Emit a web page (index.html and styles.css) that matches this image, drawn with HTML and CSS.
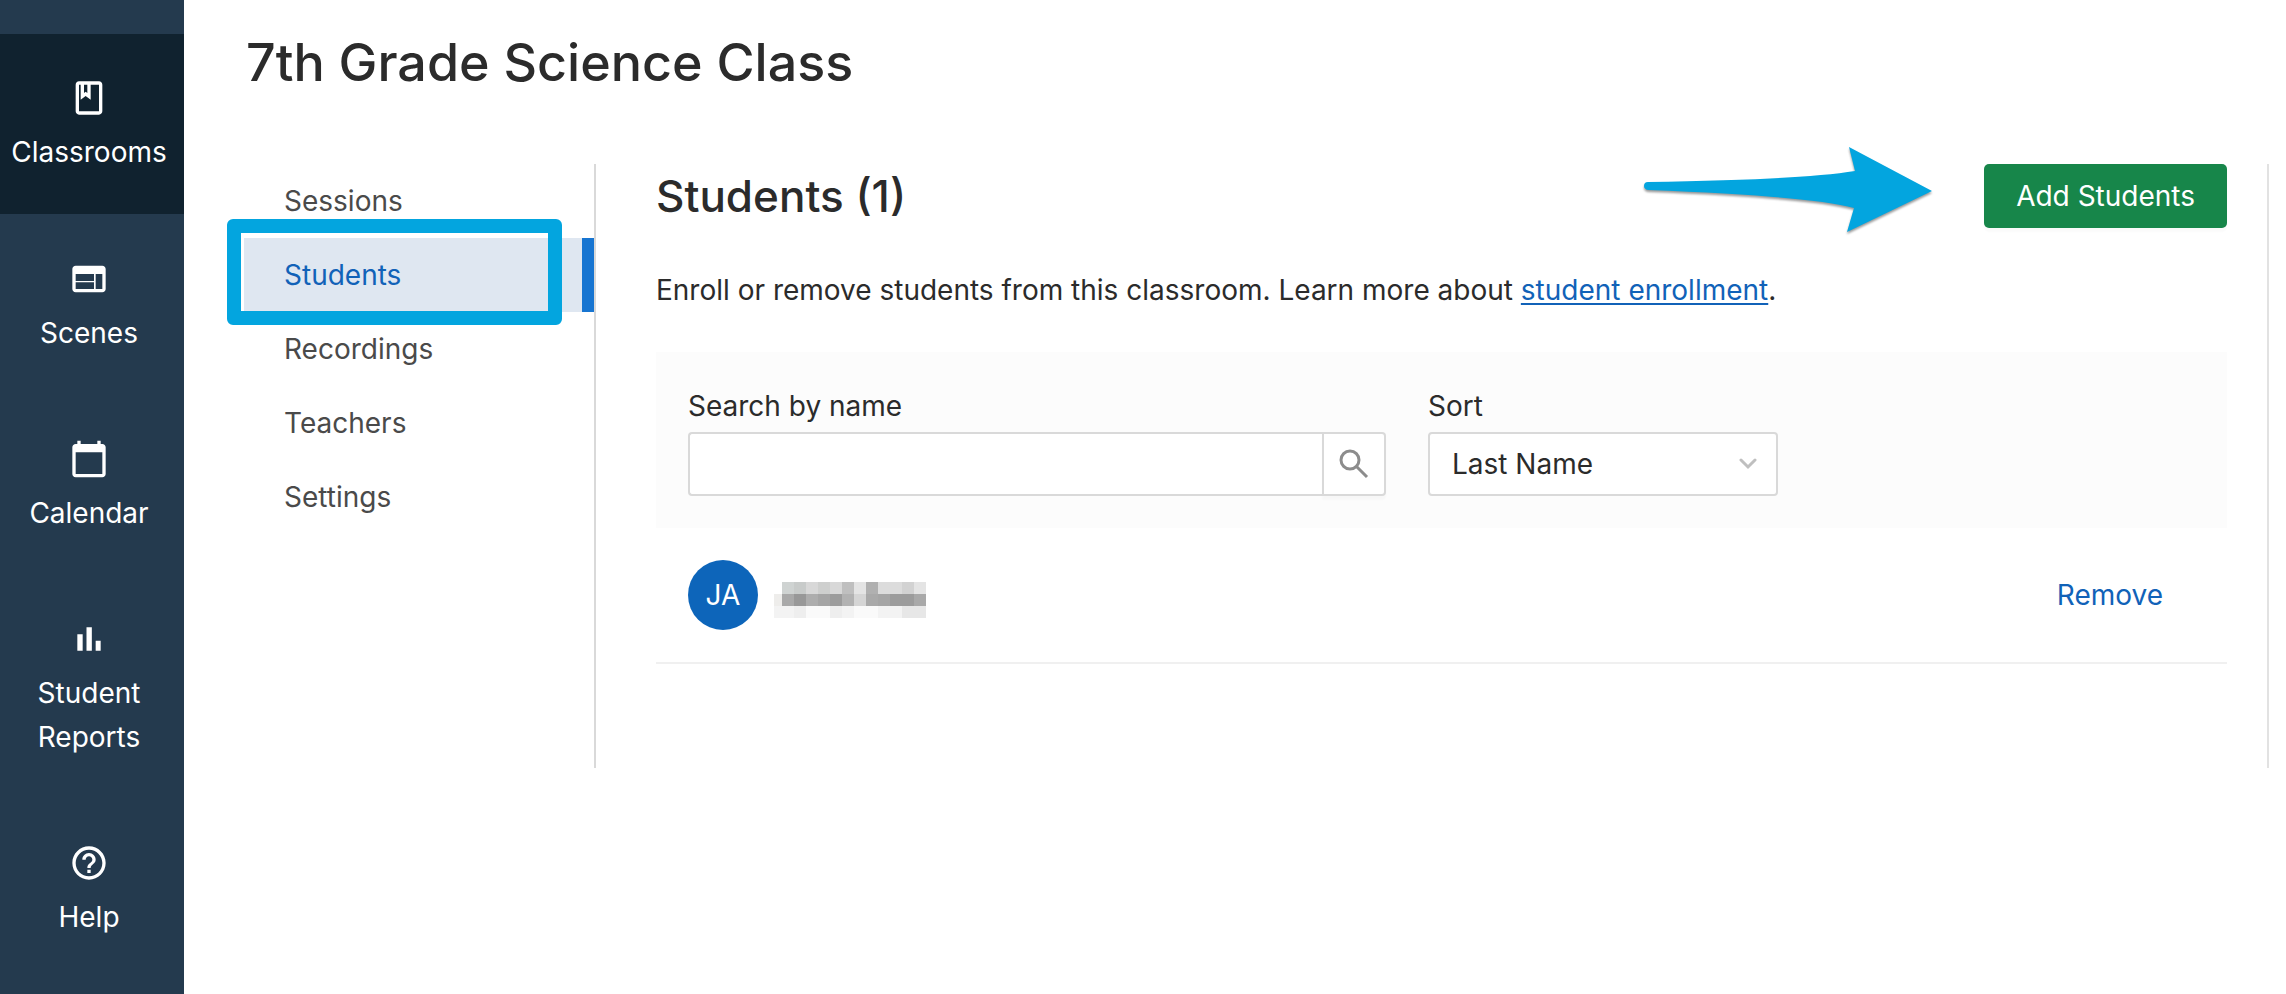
FILE: index.html
```html
<!DOCTYPE html>
<html lang="en">
<head>
<meta charset="utf-8">
<title>7th Grade Science Class</title>
<link rel="stylesheet" href="styles.css">
</head>
<body>
<div class="app">
  <nav class="sidebar" aria-label="Main">
    <a class="side-link side-link-active" href="#classrooms">
      <svg class="side-icon" viewBox="0 0 24 24" aria-hidden="true"><path d="M18 2H6c-1.1 0-2 .9-2 2v16c0 1.1.9 2 2 2h12c1.1 0 2-.9 2-2V4c0-1.1-.9-2-2-2zM9 4h2v5l-1-.75L9 9V4zm9 16H6V4h1v9l3-2.25L13 13V4h5v16z"/></svg>
      <span>Classrooms</span>
    </a>
    <a class="side-link" href="#scenes">
      <svg class="side-icon" viewBox="0 0 24 24" aria-hidden="true"><path fill-rule="evenodd" d="M20 4H4c-1.1 0-2 .9-2 2v12c0 1.100.9 2 2 2h16c1.100 0 2-.9 2-2V6c0-1.100-.9-2-2-2zM4 9h11v4.200H4zM4 14h11v4H4zM16 9h4v9h-4z"/></svg>
      <span>Scenes</span>
    </a>
    <a class="side-link" href="#calendar">
      <svg class="side-icon" viewBox="0 0 24 24" aria-hidden="true"><path d="M20 3h-1V1h-2v2H7V1H5v2H4c-1.1 0-2 .9-2 2v16c0 1.1.9 2 2 2h16c1.1 0 2-.9 2-2V5c0-1.1-.9-2-2-2zm0 18H4V8h16v13z"/></svg>
      <span>Calendar</span>
    </a>
    <a class="side-link" href="#reports">
      <svg class="side-icon" viewBox="0 0 24 24" aria-hidden="true"><path d="M5 9.200h3.200V19H5zM10.500 5h3.200v14h-3.200zM16 13h3v6h-3z"/></svg>
      <span>Student Reports</span>
    </a>
    <a class="side-link" href="#help">
      <svg class="side-icon" viewBox="0 0 24 24" aria-hidden="true"><path d="M11 18h2v-2h-2v2zm1-16C6.480 2 2 6.480 2 12s4.480 10 10 10 10-4.480 10-10S17.520 2 12 2zm0 18c-4.410 0-8-3.590-8-8s3.590-8 8-8 8 3.590 8 8-3.590 8-8 8zm0-14c-2.210 0-4 1.790-4 4h2c0-1.100.9-2 2-2s2 .9 2 2c0 2-3 1.750-3 5h2c0-2.250 3-2.500 3-5 0-2.210-1.790-4-4-4z"/></svg>
      <span>Help</span>
    </a>
  </nav>

  <main class="main">
    <h1 class="page-title">7th Grade Science Class</h1>
    <div class="panel">
      <nav class="tabs" aria-label="Classroom">
        <a class="tab" href="#sessions">Sessions</a>
        <a class="tab tab-active" href="#students" aria-current="page">Students<span class="callout-box"></span></a>
        <a class="tab" href="#recordings">Recordings</a>
        <a class="tab" href="#teachers">Teachers</a>
        <a class="tab" href="#settings">Settings</a>
      </nav>

      <section class="content">
        <header class="content-head">
          <h2 class="section-title">Students (1)</h2>
          <svg class="callout-arrow" viewBox="0 0 296 96" aria-hidden="true"><path d="M8 38Q160 36 215 27L209 3L292 47L207 88L214 64Q170 52 8 46Q4 45 4 42Q4 38 8 38Z"/></svg>
          <button class="add-button" type="button">Add Students</button>
        </header>
        <p class="intro">Enroll or remove students from this classroom. Learn more about <a class="link" href="#enrollment">student enrollment</a>.</p>

        <form class="filters">
          <div class="field field-search">
            <label for="search">Search by name</label>
            <div class="search-group">
              <input class="search-input" id="search" type="text">
              <button class="search-button" type="button" aria-label="Search">
                <svg class="search-icon" viewBox="0 0 30 30" aria-hidden="true"><circle cx="11" cy="11" r="9"/><path d="M17.500 17.500L28 28"/></svg>
              </button>
            </div>
          </div>
          <div class="field field-sort">
            <label for="sort">Sort</label>
            <div class="select-wrap">
              <select class="sort-select" id="sort"><option>Last Name</option></select>
              <svg class="chevron" viewBox="0 0 18 12" aria-hidden="true"><path d="M2 2l7 7 7-7"/></svg>
            </div>
          </div>
        </form>

        <ul class="students">
          <li class="student">
            <span class="avatar">JA</span>
            <svg class="masked-name" viewBox="0 -10 152 46" role="img" aria-label="Hidden name" shape-rendering="crispEdges">
              <path fill="#eeedeb" d="M0 12h8v12H0z"/><path fill="#f3f3f3" d="M0 24h20v12H0z"/>
              <path fill="#cfd3d2" d="M8 0h12v12H8z"/><path fill="#c8cbca" d="M20 0h12v12H20z"/><path fill="#d8d8d8" d="M32 0h12v12H32zM56 0h12v12H56z"/><path fill="#cecfce" d="M44 0h12v12H44z"/><path fill="#bfbfbf" d="M68 0h12v12H68z"/><path fill="#e4e4e4" d="M80 0h12v12H80zM140 0h12v12h-12z"/><path fill="#b0b0b0" d="M92 0h12v12H92z"/><path fill="#dcdcdc" d="M104 0h24v12h-24z"/><path fill="#d2d2d2" d="M128 0h12v12h-12z"/>
              <path fill="#a9a9a9" d="M8 12h12v12H8zM92 12h12v12H92zM140 12h12v12h-12z"/><path fill="#989898" d="M20 12h12v12H20z"/><path fill="#adadad" d="M32 12h12v12H32z"/><path fill="#a5a5a5" d="M44 12h12v12H44zM104 12h12v12h-12z"/><path fill="#9c9c9c" d="M56 12h12v12H56zM116 12h24v12h-24z"/><path fill="#b2b2b2" d="M68 12h12v12H68z"/><path fill="#d5d5d5" d="M80 12h12v12H80z"/>
              <path fill="#eeeeee" d="M20 24h12v12H20zM56 24h12v12H56z"/><path fill="#fafafa" d="M32 24h24v12H32zM80 24h24v12H80z"/><path fill="#f3f3f3" d="M68 24h12v12H68zM104 24h24v12h-24z"/><path fill="#e7e7e7" d="M128 24h24v12h-24z"/>
            </svg>
            <button class="remove-button" type="button">Remove</button>
          </li>
        </ul>
      </section>
    </div>
  </main>
</div>
</body>
</html>
```

FILE: styles.css
```css
*, *::before, *::after { box-sizing: border-box; }

body {
  margin: 0;
  background: #fff;
  color: #2b2b2b;
  font: 28px/44px Inter, "Liberation Sans", sans-serif;
}

button, input, select { font: inherit; color: inherit; }

.app { display: flex; min-height: 100vh; }

/* Main navigation */
.sidebar {
  flex: 0 0 184px;
  padding-top: 34px;
  background: #243a4e;
}

.side-link {
  display: flex;
  flex-direction: column;
  align-items: center;
  gap: 12px;
  padding: 44px 6px 40px 0;
  color: #fff;
  text-align: center;
  text-decoration: none;
}

.side-link-active { margin-bottom: 1px; background: #10222f; }

.side-icon { width: 40px; height: 40px; fill: currentColor; }

/* Page */
.main { flex: 1; min-width: 0; padding: 33px 17px 0 60px; }

.page-title {
  margin: 0 0 71px;
  padding-left: 2px;
  font-size: 52px;
  line-height: 60px;
  font-weight: 500;
}

.panel { display: flex; border-right: 2px solid #e2e2e2; }

.tabs { flex: 0 0 352px; border-right: 2px solid #d9d9d9; }

.tab {
  position: relative;
  display: block;
  padding: 15px 40px;
  color: #4a4a4a;
  text-decoration: none;
}

.tab-active {
  background: #dfe7f1;
  border-right: 12px solid #1775d1;
  color: #1162b8;
}

.callout-box {
  position: absolute;
  top: -19px;
  right: 20px;
  bottom: -13px;
  left: -17px;
  border: 14px solid #03a5df;
  border-radius: 6px;
}

.content { flex: 1; min-width: 0; padding: 0 40px 104px 60px; }

.content-head {
  position: relative;
  display: flex;
  align-items: center;
  justify-content: space-between;
}

.section-title { margin: 0; font-size: 44px; line-height: 60px; font-weight: 500; }

.callout-arrow {
  position: absolute;
  top: -20px;
  right: 291px;
  width: 296px;
  height: 96px;
  fill: #03a5df;
  filter: drop-shadow(0 2px 1px rgba(0, 0, 0, 0.4));
}

.add-button {
  height: 64px;
  padding: 0 32px;
  border: 0;
  border-radius: 5px;
  background: #17864a;
  box-shadow: 0 4px 2px rgba(0, 0, 0, 0.02);
  color: #fff;
}

.intro { margin: 40px 0; }

.link { color: #1162b8; text-decoration: underline; text-decoration-thickness: 2px; text-underline-offset: 3px; }

.filters {
  display: flex;
  gap: 42px;
  padding: 32px;
  background: #fcfcfc;
}

.field { display: flex; flex-direction: column; gap: 4px; }
.field-search { flex: 0 1 698px; }
.field-sort { flex: 0 1 350px; }

.search-group { display: flex; }

.search-input {
  flex: 1;
  min-width: 0;
  height: 64px;
  padding: 0 22px;
  border: 2px solid #d9d9d9;
  border-right: 0;
  border-radius: 4px 0 0 4px;
  background: #fff;
}

.search-button {
  display: flex;
  align-items: center;
  justify-content: center;
  width: 64px;
  height: 64px;
  padding: 0;
  border: 2px solid #d9d9d9;
  border-radius: 0 4px 4px 0;
  background: #fff;
  box-shadow: 0 4px 2px rgba(0, 0, 0, 0.02);
}

.search-icon { width: 30px; height: 30px; fill: none; stroke: #8c8c8c; stroke-width: 3; }

.select-wrap { position: relative; }

.sort-select {
  appearance: none;
  display: block;
  width: 100%;
  height: 64px;
  padding: 0 60px 0 22px;
  border: 2px solid #d9d9d9;
  border-radius: 4px;
  background: #fff;
}

.chevron {
  position: absolute;
  top: 26px;
  right: 21px;
  width: 18px;
  height: 12px;
  fill: none;
  stroke: #bfbfbf;
  stroke-width: 3;
  stroke-linecap: round;
  pointer-events: none;
}

.students { margin: 0; padding: 0; list-style: none; }

.student {
  display: flex;
  align-items: center;
  gap: 16px;
  padding: 32px 64px 32px 32px;
  border-bottom: 2px solid #f0f0f0;
}

.avatar {
  flex: none;
  width: 70px;
  border-radius: 50%;
  background: #0d65ba;
  color: #fff;
  line-height: 70px;
  text-align: center;
}

.masked-name { width: 152px; height: 46px; }

.remove-button {
  margin-left: auto;
  padding: 0;
  border: 0;
  background: none;
  color: #1162b8;
}
```
